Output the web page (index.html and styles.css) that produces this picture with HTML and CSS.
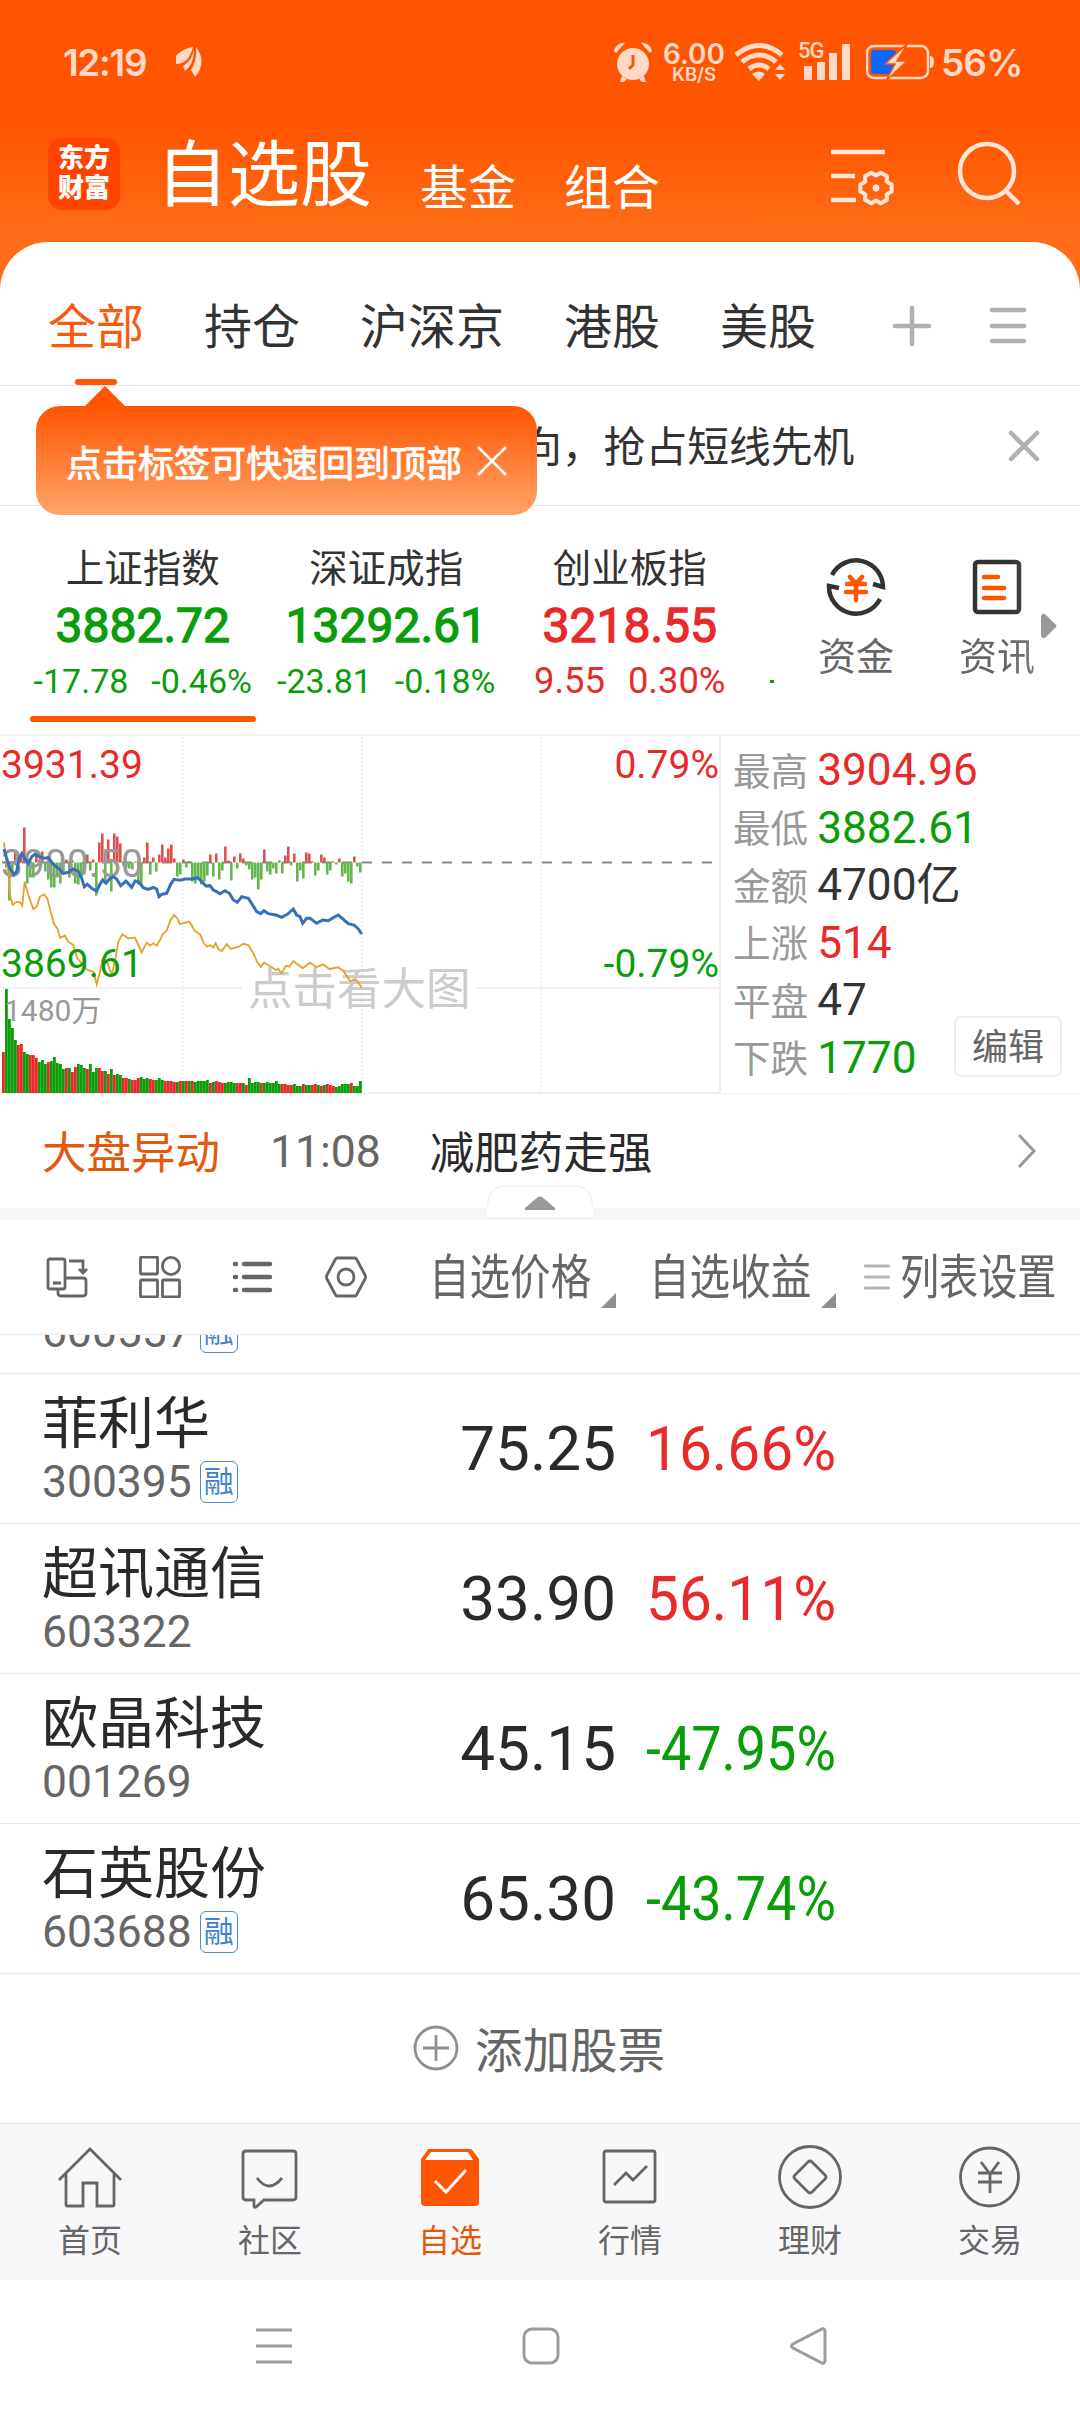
FILE: index.html
```html
<!DOCTYPE html>
<html lang="zh-CN">
<head>
  <meta charset="UTF-8">
  <title>自选股</title>
  <link rel="stylesheet" href="styles.css">
</head>
<body>
  <div class="screen">

    <header class="header">
      <div class="status">
        <span class="clock">12:19</span>
        <svg class="leaf" width="28" height="30" viewBox="0 0 28 30"><path d="M18 0C11 1 4 5 1 9v8c8 0 14-5 17-17zM19 1C18 10 14 15 8 19l2 5c6-5 9-11 9-23zM21 0c1 9-1 16-5 23l4 7c8-9 9-20 1-30z"/></svg>
        <svg class="alarm" width="38" height="40" viewBox="0 0 38 40"><circle cx="19" cy="22" r="16"/><path d="M0 9C1 4 6 0 11 1L2 11zM38 9C37 4 32 0 27 1l9 10zM8 34l5 3-3 3H6zM30 34l-5 3 3 3h4z"/><path class="hand" d="M19 13v10l-4 4"/></svg>
        <div class="speed"><b>6.00</b><small>KB/S</small></div>
        <svg class="wifi" width="52" height="38" viewBox="0 0 52 38"><path class="arc" d="M2 12Q25-7 48 12M8 19Q25 5 42 19M15 26q10-8 20 0"/><path d="M18 31q7-5 13 0l-6 7zM41 27l5-6 5 6zM41 31h10l-5 6z"/></svg>
        <div class="signal">
          <small>5G</small>
          <svg width="52" height="38" viewBox="0 0 52 38"><rect x="6" y="23" width="8" height="14" rx="1"/><rect x="19" y="19" width="8" height="18" rx="1"/><rect x="31" y="10" width="8" height="27" rx="1"/><rect x="44" y="1" width="8" height="36" rx="1"/></svg>
        </div>
        <svg class="battery" width="68" height="38" viewBox="0 0 68 38"><rect class="case" x="1" y="3" width="61" height="32" rx="7"/><rect class="charge" x="5" y="7" width="25" height="24" rx="4"/><path d="M64 13h1q3 1 3 6t-3 6h-1z"/><path class="bolt" d="M42 0L19 21h10L20 38 41 18H31z"/></svg>
        <span class="percent">56%</span>
      </div>
      <div class="title-bar">
        <div class="logo">东方<br>财富</div>
        <span class="title">自选股</span>
        <span class="subtitle">基金</span>
        <span class="subtitle">组合</span>
        <svg class="filter" width="64" height="56" viewBox="0 0 64 56"><path d="M0 6h54M0 30h24M0 54h25"/><path class="gear" d="M45 29.5l4.7-2.8 6.2 3.6-.1 5.4 4.8 2.7v7.2l-4.8 2.7.1 5.4-6.2 3.6-4.7-2.8-4.7 2.8-6.2-3.6.1-5.4-4.8-2.7v-7.2l4.8-2.7-.1-5.4 6.2-3.6z"/><circle cx="45" cy="42" r="3.4"/></svg>
        <svg class="search" width="64" height="66" viewBox="0 0 64 66"><circle cx="30" cy="30" r="27"/><path d="M48 49l14 14"/></svg>
      </div>
    </header>

    <main class="card">
      <nav class="tabs">
        <span class="tab active">全部</span>
        <span class="tab">持仓</span>
        <span class="tab">沪深京</span>
        <span class="tab">港股</span>
        <span class="tab">美股</span>
        <svg class="add-tab" width="40" height="40" viewBox="0 0 40 40"><path d="M20 2v36M3 20h34"/></svg>
        <svg class="menu-tab" width="38" height="40" viewBox="0 0 38 40"><path d="M3 4h32M3 20h32M3 35h32"/></svg>
      </nav>

      <div class="notice">
        <span>向，抢占短线先机</span>
        <svg width="32" height="32" viewBox="0 0 32 32"><path d="M3 3l26 26M29 3L3 29"/></svg>
        <div class="tooltip">
          <span>点击标签可快速回到顶部</span>
          <svg width="30" height="30" viewBox="0 0 30 30"><path d="M1 1l28 28M29 1L1 29"/></svg>
        </div>
      </div>

      <section class="indexes">
        <div class="index down current">
          <span class="index-name">上证指数</span>
          <b>3882.72</b>
          <span class="change"><i>-17.78</i><i>-0.46%</i></span>
        </div>
        <div class="index down">
          <span class="index-name">深证成指</span>
          <b>13292.61</b>
          <span class="change"><i>-23.81</i><i>-0.18%</i></span>
        </div>
        <div class="index up">
          <span class="index-name">创业板指</span>
          <b>3218.55</b>
          <span class="change"><i>9.55</i><i>0.30%</i></span>
        </div>
        <div class="next-index"></div>
        <div class="shortcut">
          <svg width="60" height="60" viewBox="0 0 60 60"><path class="line" d="M6 18A27 27 0 0 1 57 30l-10-3M54 42A27 27 0 0 1 3 29l10 2"/><path class="mark" d="M24 20l6 7 6-7M21 27h18M20 35h20M30 28v15"/></svg>
          <span>资金</span>
        </div>
        <div class="shortcut fading">
          <svg width="60" height="60" viewBox="0 0 60 60"><rect class="line" x="8" y="5" width="44" height="50" rx="3"/><path class="mark" d="M17 20h14M17 31h20M17 41h20"/></svg>
          <span>资讯</span>
        </div>
        <svg class="more" width="16" height="26" viewBox="0 0 16 26"><path d="M0 3q2-4 5-1l10 10q1 1 0 2L5 24q-3 3-5-1z"/></svg>
      </section>

      <section class="market">
        <svg class="chart" width="721" height="359" viewBox="0 0 721 359">
          <path class="grid-dot" d="M183 2v356M362 2v356M541 2v356"/>
          <path class="grid" d="M0 253h242M476 253h244M0 358h720M720 0v358"/>
          <path class="zero" d="M2 127.5h712"/>
          <g id="flow"></g>
          <g id="volume"></g>
          <text class="watermark" x="248" y="270">点击看大图</text>
          <text class="axis" x="1" y="142">3900.50</text>
          <g transform="translate(0,-10) scale(.33333)">
            <polyline class="average" points="12,352 18,400 25,440 30,510 38,540 50,530 60,532 67,542 74,470 85,510 100,552 110,545 120,515 132,508 142,520 152,560 162,597 172,610 180,638 195,632 205,650 220,660 232,700 245,715 262,735 280,740 290,778 300,740 308,702 322,712 335,750 345,710 355,650 367,628 385,640 405,638 415,660 425,682 440,653 450,662 460,655 470,662 480,645 490,625 500,617 512,585 522,570 532,580 540,598 552,594 568,590 585,618 600,628 612,655 622,665 630,660 640,668 647,655 655,672 665,678 680,658 692,672 705,668 715,666 730,656 745,660 760,685 772,712 782,725 792,713 805,720 828,735 835,732 845,745 858,722 868,725 880,708 892,718 908,730 930,713 950,726 970,718 988,732 1015,727 1030,738 1050,768 1068,764 1080,780 1085,788"/>
            <polyline class="price" points="12,372 20,400 30,432 42,448 50,440 58,400 66,385 74,400 85,415 95,395 105,388 118,395 132,400 145,398 160,418 175,430 190,445 205,442 220,432 235,440 245,460 253,485 262,478 275,490 290,498 300,478 308,465 318,475 328,462 340,455 350,462 362,482 378,468 395,487 405,468 415,470 430,488 445,493 460,487 470,492 477,515 485,508 500,505 512,478 522,463 540,466 555,462 575,462 593,458 605,470 618,483 630,482 640,495 650,500 660,506 675,497 688,505 700,525 712,532 725,515 745,520 758,540 770,560 782,566 792,557 805,566 828,570 845,577 862,568 880,552 890,570 900,575 908,595 920,580 930,580 950,595 968,585 985,587 1000,578 1015,570 1030,583 1045,596 1062,600 1075,612 1085,627"/>
          </g>
          <text class="axis up" x="1" y="43">3931.39</text>
          <text class="axis down" x="1" y="242">3869.61</text>
          <text class="axis up" x="719" y="43" text-anchor="end">0.79%</text>
          <text class="axis down" x="719" y="242" text-anchor="end">-0.79%</text>
          <text class="amount" x="4" y="286">1480万</text>
        </svg>
        <div class="stats">
          <div class="stat"><span>最高</span><em class="up">3904.96</em></div>
          <div class="stat"><span>最低</span><em class="down">3882.61</em></div>
          <div class="stat"><span>金额</span><em>4700亿</em></div>
          <div class="stat"><span>上涨</span><em class="up">514</em></div>
          <div class="stat"><span>平盘</span><em>47</em></div>
          <div class="stat"><span>下跌</span><em class="down">1770</em></div>
          <button class="edit">编辑</button>
        </div>
      </section>

      <div class="news">
        <span class="news-tag">大盘异动</span>
        <span class="news-time">11:08</span>
        <span class="news-text">减肥药走强</span>
        <svg class="chevron" width="20" height="36" viewBox="0 0 20 36"><path d="M2 2l15 16L2 34"/></svg>
      </div>
      <div class="divider">
        <svg class="handle" width="112" height="34" viewBox="0 0 112 34"><path class="flap" d="M0 33L5 13Q9 1 20 1h72q11 0 15 12l5 20z"/><path class="tri" d="M41 23L54 12q2-1 4 0l13 11q1 2-2 2H43q-3 0-2-2z"/></svg>
      </div>

      <div class="toolbar">
        <svg width="42" height="42" viewBox="0 0 42 42"><rect x="2" y="3" width="17" height="30" rx="2"/><path d="M7 27h8M23 5h14v11M33 13l4 4 4-4M20 22h17q3 0 3 3v12q0 3-3 3H15q-3 0-3-3v-4"/></svg>
        <svg width="42" height="42" viewBox="0 0 42 42"><rect x="1.5" y="1" width="17" height="17" rx="1"/><circle cx="32" cy="10" r="8.6"/><rect x="1.5" y="24" width="17" height="17" rx="1"/><rect x="23.5" y="24" width="17" height="17" rx="1"/></svg>
        <svg class="list-icon" width="42" height="42" viewBox="0 0 42 42"><path d="M3 8h1M3 21h1M3 34h1M12 8h26M12 21h26M12 34h26"/></svg>
        <svg width="42" height="42" viewBox="0 0 42 42"><path d="M12 2h18q1 0 2 2l8 15q1 2 0 4l-8 15q-1 2-2 2H12q-1 0-2-2L2 23q-1-2 0-4l8-15q1-2 2-2z"/><circle cx="21" cy="21" r="8"/></svg>
        <span class="sort"><u>自选价格</u></span>
        <span class="sort"><u>自选收益</u></span>
        <span class="settings"><svg width="26" height="28" viewBox="0 0 26 28"><path d="M1 3h24M1 14h24M1 25h24"/></svg><u>列表设置</u></span>
      </div>

      <section class="stocks">
        <div class="stock cut">
          <div class="stock-id"><span class="code">600557<i class="badge">融</i></span></div>
        </div>
        <div class="stock">
          <div class="stock-id"><span class="name">菲利华</span><span class="code">300395<i class="badge">融</i></span></div>
          <span class="value">75.25</span>
          <span class="gain up">16.66%</span>
        </div>
        <div class="stock">
          <div class="stock-id"><span class="name">超讯通信</span><span class="code">603322</span></div>
          <span class="value">33.90</span>
          <span class="gain up">56.11%</span>
        </div>
        <div class="stock">
          <div class="stock-id"><span class="name">欧晶科技</span><span class="code">001269</span></div>
          <span class="value">45.15</span>
          <span class="gain down narrow">-47.95%</span>
        </div>
        <div class="stock">
          <div class="stock-id"><span class="name">石英股份</span><span class="code">603688<i class="badge">融</i></span></div>
          <span class="value">65.30</span>
          <span class="gain down narrow">-43.74%</span>
        </div>
      </section>

      <div class="add-stock">
        <svg width="46" height="46" viewBox="0 0 46 46"><circle cx="23" cy="23" r="21"/><path d="M10 23h26M23 10v26"/></svg>
        <span>添加股票</span>
      </div>
    </main>

    <nav class="bottom-nav">
      <div class="nav-item">
        <svg width="66" height="66" viewBox="0 0 66 66"><path d="M2 35L33 4l31 31M9 29v31q0 1 1 1h16V38h14v23h16q1 0 1-1V29"/></svg>
        <span>首页</span>
      </div>
      <div class="nav-item">
        <svg width="66" height="66" viewBox="0 0 66 66"><path d="M9 6h47q3 0 3 3v43q0 3-3 3H27l-8 7q-2 1-2-1v-6H9q-3 0-3-3V9q0-3 3-3z"/><path d="M20 33q12 16 25 0"/></svg>
        <span>社区</span>
      </div>
      <div class="nav-item active">
        <svg width="66" height="66" viewBox="0 0 66 66"><path class="box" d="M11 4h42q2 0 3 2l6 8v43q0 4-4 4H8q-4 0-4-4V14l6-8q1-2 1-2z"/><path class="lid" d="M14 7h37l5 8H8z"/><path class="tick" d="M18 36l11 11 20-22"/></svg>
        <span>自选</span>
      </div>
      <div class="nav-item">
        <svg width="66" height="66" viewBox="0 0 66 66"><rect x="7" y="6" width="51" height="51" rx="2"/><path d="M17 40l12-12 7 7 14-14"/></svg>
        <span>行情</span>
      </div>
      <div class="nav-item">
        <svg width="66" height="66" viewBox="0 0 66 66"><circle cx="33" cy="32" r="30.5"/><path d="M31 17q2-2 4 0l13 13q2 2 0 4L35 47q-2 2-4 0L18 34q-2-2 0-4z"/></svg>
        <span>理财</span>
      </div>
      <div class="nav-item">
        <svg width="66" height="66" viewBox="0 0 66 66"><circle cx="32.5" cy="32" r="29"/><path d="M24 17l9 12 9-12M21 28h24M21 37h24M33 28v20"/></svg>
        <span>交易</span>
      </div>
    </nav>

    <footer class="system-bar">
      <svg width="38" height="38" viewBox="0 0 38 38"><path d="M1 3h36M1 19h36M1 35h36"/></svg>
      <svg width="38" height="38" viewBox="0 0 38 38"><rect x="2" y="2" width="34" height="34" rx="8"/></svg>
      <svg width="38" height="38" viewBox="0 0 38 38"><path d="M33 2q3-1 3 3v28q0 4-3 3L4 21q-3-2 0-4z"/></svg>
    </footer>
  </div>

  <script src="script.js"></script>
</body>
</html>
```

FILE: styles.css
```css
body {
  margin: 0;
  font-family: Roboto, "Noto Sans CJK SC", sans-serif;
  color: #333;
  background: #fff;
}
svg {
  display: block;
  flex: none;
  fill: none;
}
i, em {
  font-style: normal;
}
u {
  text-decoration: none;
}
.screen {
  width: 1080px;
  height: 2412px;
  display: flex;
  flex-direction: column;
  overflow: hidden;
}
.up {
  color: #e92a2a;
  fill: #e92a2a;
}
.down {
  color: #0a9d0a;
  fill: #0a9d0a;
}

/* header */
.header {
  height: 300px;
  margin-bottom: -58px;
  flex: none;
  background: linear-gradient(#ff5500 125px, #ff6d18 235px);
  color: #fff;
}
.status {
  display: flex;
  align-items: center;
  height: 124px;
  box-sizing: border-box;
  padding: 0 0 0 63px;
  color: #ffd9c6;
  font-family: Inter, sans-serif;
  font-weight: 600;
}
.status svg {
  fill: #ffd9c6;
}
.clock {
  width: 113px;
  font-size: 37px;
  letter-spacing: -1.3px;
}
.status .alarm {
  margin: 0 12px 0 411px;
}
.alarm .hand {
  fill: none;
  stroke: #ff5500;
  stroke-width: 3;
}
.speed {
  display: flex;
  flex-direction: column;
  align-items: center;
  width: 60px;
  margin-right: 10px;
}
.speed b {
  font-size: 28px;
  line-height: 22px;
  font-weight: 600;
}
.speed small {
  margin-top: 2px;
  font-size: 18.5px;
  line-height: 15px;
}
.wifi .arc {
  fill: none;
  stroke: #ffd9c6;
  stroke-width: 5;
}
.signal {
  position: relative;
  margin-left: 12px;
}
.signal small {
  position: absolute;
  top: -3px;
  left: 0;
  font: 500 22px/22px Roboto, sans-serif;
  letter-spacing: -1px;
}
.battery {
  margin: 0 7px 0 16px;
}
.battery .case {
  fill: none;
  stroke: #ffd9c6;
  stroke-width: 2.5;
}
.battery .charge {
  fill: #0a66ff;
}
.battery .bolt {
  stroke: #ff5500;
  stroke-width: 1.5;
}
.leaf {
  margin-left: -1px;
}
.percent {
  font-size: 37px;
  letter-spacing: -0.9px;
}
.title-bar {
  display: flex;
  align-items: center;
  height: 100px;
  padding: 0 48px;
}
.logo {
  width: 72px;
  height: 72px;
  border-radius: 14px;
  background: #ff4400;
  font-size: 26px;
  line-height: 30px;
  font-weight: 900;
  text-align: center;
  padding: 5px 0;
  box-sizing: border-box;
}
.title {
  margin: 4px 0 0 36px;
  font-size: 72px;
  line-height: 100px;
}
.subtitle {
  margin: 30px 0 0 48px;
  font-size: 48px;
  line-height: 60px;
}
.filter {
  margin-left: 171px;
  overflow: visible;
  stroke: #ffe6d8;
  stroke-width: 4.5;
}
.gear {
  stroke-width: 4;
  stroke-linejoin: round;
}
.filter circle {
  fill: #ffe6d8;
  stroke: none;
}
.search {
  margin-left: 62px;
  stroke: #ffe6d8;
  stroke-width: 4.5;
}

/* tabs */
.card {
  flex: 1;
  display: flex;
  flex-direction: column;
  border-radius: 48px 48px 0 0;
  background: #fff;
}
.tabs {
  display: flex;
  align-items: center;
  height: 143px;
  gap: 60px;
  padding: 0 48px;
  border-bottom: 1px solid #e4e4e4;
}
.tab {
  position: relative;
  padding-top: 29px;
  font-size: 48px;
  line-height: 114px;
}
.tab.active {
  color: #f95a0c;
}
.tab.active::after {
  content: "";
  position: absolute;
  left: 27px;
  bottom: 0;
  width: 42px;
  height: 6px;
  border-radius: 3px;
  background: #ff5500;
}
.tabs svg {
  margin-top: 24px;
  stroke: #b0b0b0;
  stroke-width: 4.5;
  stroke-linecap: round;
}
.add-tab {
  margin-left: 16px;
}
.menu-tab {
  margin-left: -3px;
}
.notice {
  position: relative;
  display: flex;
  align-items: center;
  justify-content: space-between;
  height: 119px;
  padding: 0 40px 0 520px;
  border-bottom: 1px solid #e4e4e4;
  font-size: 41.8px;
}
.notice > span {
  padding-bottom: 4px;
}
.notice > svg {
  stroke: #b0b0b0;
  stroke-width: 4.5;
  stroke-linecap: round;
}
.tooltip {
  position: absolute;
  left: 36px;
  top: 20px;
  width: 501px;
  height: 109px;
  box-sizing: border-box;
  display: flex;
  align-items: center;
  padding: 1px 0 0 30px;
  gap: 15px;
  border-radius: 24px;
  background: linear-gradient(#ff5500, #ffa46a);
  color: #fff;
  font-size: 36px;
  -webkit-text-stroke: 0.9px #fff;
}
.tooltip::before {
  content: "";
  position: absolute;
  left: 48px;
  top: -20px;
  border: 21px solid transparent;
  border-top: 0;
  border-bottom-color: #ff5500;
}
.tooltip svg {
  stroke: #fff;
  stroke-width: 2.6;
}

/* index cards */
.indexes {
  position: relative;
  display: flex;
  height: 228px;
  padding-left: 21px;
  border-bottom: 2px solid #f3f3f3;
}
.index {
  position: relative;
  width: 243.5px;
  display: flex;
  flex-direction: column;
  align-items: center;
  padding-top: 36px;
  box-sizing: border-box;
}
.index-name {
  font-size: 38.5px;
  line-height: 54px;
  color: #333;
}
.index b {
  font-size: 48px;
  line-height: 60px;
  font-weight: 400;
  -webkit-text-stroke: 1.3px currentColor;
}
.change {
  display: flex;
  gap: 23px;
  font-size: 34px;
  line-height: 50px;
}
.index.up .change {
  font-size: 36.4px;
}
.index.current::after {
  content: "";
  position: absolute;
  left: 9px;
  top: 210px;
  width: 226px;
  height: 6px;
  border-radius: 3px;
  background: #ff5500;
}
.next-index {
  width: 4px;
  height: 3px;
  margin: 174px 10px 0 18px;
  background: #0a9d0a;
}
.shortcut {
  width: 141px;
  display: flex;
  flex-direction: column;
  align-items: center;
  padding-top: 51px;
  font-size: 38px;
  line-height: 54px;
  color: #666;
}
.shortcut span {
  margin-top: 13px;
}
.shortcut:nth-child(5) {
  margin-left: 2px;
}
.shortcut .line {
  stroke: #333;
  stroke-width: 4.5;
}
.shortcut .mark {
  stroke: #ff5500;
  stroke-width: 4.5;
  stroke-linecap: round;
}
.fading {
  -webkit-mask-image: linear-gradient(90deg, #000 60%, rgba(0,0,0,0.55));
  mask-image: linear-gradient(90deg, #000 60%, rgba(0,0,0,0.55));
}
.more {
  position: absolute;
  left: 1041px;
  top: 107px;
  fill: #999;
}

/* chart */
.market {
  display: flex;
  height: 358px;
  margin-top: -1px;
  border-bottom: 1px solid #f0f0f0;
}
.grid, .grid-dot {
  stroke: #f0f0f0;
  stroke-width: 2;
}
.grid-dot {
  stroke-dasharray: 2 2;
}
.zero {
  stroke: #888;
  stroke-width: 2;
  stroke-dasharray: 10 10;
}
.price {
  stroke: #3670b8;
  stroke-width: 9;
}
.average {
  stroke: #e8a02c;
  stroke-width: 5.5;
}
.axis {
  font-size: 39px;
}
.axis:not(.up):not(.down) {
  fill: #999;
}
.watermark {
  font-size: 44.5px;
  fill: #ccc;
}
.amount {
  font-size: 30px;
  fill: #999;
}
.bar-up {
  fill: #e92a2a;
}
.bar-down {
  fill: #0a9d0a;
}
.flow-up {
  fill: #e05050;
}
.flow-down {
  fill: #62b84c;
}
.stats {
  position: relative;
  padding: 7px 0 0 12px;
}
.stat {
  display: flex;
  align-items: center;
  height: 57.5px;
  font-size: 37.6px;
  color: #999;
}
.stat span {
  padding-bottom: 5px;
}
.stat em {
  margin-left: 9px;
  font-size: 44.2px;
  line-height: 57px;
}
.stat em:not(.up):not(.down) {
  color: #333;
}
.edit {
  position: absolute;
  left: 233px;
  top: 281px;
  width: 108px;
  height: 61px;
  padding: 4px 0 0;
  border: 2px solid #eee;
  border-radius: 7px;
  background: #fff;
  color: #666;
  font: 36px/53px Roboto, "Noto Sans CJK SC", sans-serif;
}

/* news */
.news {
  display: flex;
  align-items: center;
  height: 114px;
  padding: 0 43px 0 42px;
  font-size: 44.5px;
  color: #2a2a2a;
}
.news-tag, .news-text {
  padding-bottom: 4px;
}
.news-tag {
  color: #e2590c;
}
.news-time {
  margin: 0 49px 0 50px;
  padding-top: 2px;
  color: #666;
}
.chevron {
  margin-left: auto;
  stroke: #999;
  stroke-width: 3;
}
.divider {
  position: relative;
  height: 12px;
  background: #f6f7fa;
}
.handle {
  position: absolute;
  left: 484px;
  top: -23px;
}
.flap {
  fill: #fff;
  stroke: #f2f2f4;
  stroke-width: 1.5;
}
.tri {
  fill: #999;
}

/* toolbar */
.toolbar {
  display: flex;
  align-items: center;
  height: 114px;
  padding-left: 46px;
  border-bottom: 1px solid #eaeaea;
  color: #666;
  font-size: 48px;
}
.toolbar > svg {
  margin-right: 51px;
  stroke: #666;
  stroke-width: 2.8;
}
.toolbar .list-icon {
  stroke-width: 4.5;
  stroke-linecap: round;
}
.toolbar u {
  display: block;
  width: 161px;
  padding-bottom: 9px;
  white-space: nowrap;
  transform: scaleX(0.845);
  transform-origin: left;
}
.sort {
  position: relative;
  width: 220px;
}
.sort:first-of-type {
  margin-left: 11px;
}
.sort::after {
  content: "";
  position: absolute;
  left: 172px;
  bottom: 9px;
  border-left: 15px solid transparent;
  border-bottom: 15px solid #8e8e94;
}
.settings {
  display: flex;
  align-items: center;
  gap: 10px;
  margin-left: -5px;
}
.settings svg {
  stroke: #b5b5b5;
  stroke-width: 2.8;
  stroke-linecap: round;
}
.toolbar .settings u {
  transform: scaleX(0.815);
}

/* stock list */
.stocks {
  display: flex;
  flex-direction: column;
  justify-content: flex-end;
  height: 639px;
  overflow: hidden;
}
.stock {
  display: flex;
  flex: none;
  align-items: center;
  height: 149px;
  padding-left: 42px;
  border-bottom: 1px solid #eaeaea;
}
.stock-id {
  width: 371px;
  display: flex;
  flex-direction: column;
}
.name {
  font-size: 56px;
  line-height: 66px;
  padding-top: 1px;
  margin-bottom: -1px;
  color: #2a2a2a;
}
.cut .stock-id {
  padding-top: 66px;
}
.code {
  display: flex;
  align-items: center;
  font-size: 44.4px;
  line-height: 52px;
  color: #666;
}
.badge {
  width: 36px;
  height: 40px;
  margin-left: 8px;
  border: 1.5px solid #4c8dcb;
  border-radius: 6px;
  color: #3f83cf;
  font-size: 30px;
  line-height: 39px;
  text-align: center;
}
.value {
  width: 203px;
  font-size: 62px;
  text-align: right;
  color: #2a2a2a;
}
.gain {
  margin-left: 30px;
  font-size: 62px;
  transform: scaleX(0.945);
  transform-origin: left;
}
.gain.narrow {
  transform: scaleX(0.87);
}
.add-stock {
  display: flex;
  align-items: center;
  justify-content: center;
  height: 148px;
  gap: 16px;
  padding-right: 2px;
  color: #666;
  font-size: 47.5px;
}
.add-stock span {
  padding-bottom: 2px;
}
.add-stock svg {
  stroke: #8e8e94;
  stroke-width: 2.8;
}

/* bottom */
.bottom-nav {
  display: flex;
  flex: none;
  height: 156px;
  border-top: 1px solid #e2e2e4;
  background: #f8f8fa;
}
.nav-item {
  flex: 1;
  display: flex;
  flex-direction: column;
  align-items: center;
  padding-top: 21px;
  color: #666;
  font-size: 32px;
  line-height: 44px;
}
.nav-item span {
  margin-top: 8px;
}
.nav-item svg {
  stroke: #666;
  stroke-width: 2.8;
}
.nav-item.active {
  color: #e2590c;
}
.nav-item .box {
  fill: #ff5500;
  stroke: none;
}
.nav-item .lid {
  fill: #fff;
  stroke: none;
}
.nav-item .tick {
  stroke: #fff;
  stroke-width: 3;
}
.system-bar {
  flex: none;
  display: flex;
  align-items: center;
  gap: 229px;
  height: 132px;
  padding-left: 255px;
  background: #fff;
}
.system-bar svg {
  stroke: #9c9c9c;
  stroke-width: 3;
}
```

FILE: script.js
```js
// one entry per 3px column, r = up, g = down
const volume = '41r 104g 74g 65g 53g 48r 49r 41g 39g 38r 38r 35r 31g 33g 29g 31r 32g 36g 30g 29g 24g 25r 25g 21r 26r 29g 28g 25g 24r 29g 21g 25g 25r 22r 22g 19r 24g 18r 19g 18g 15r 15r 14g 13r 13r 15r 16g 14g 15g 14r 13r 13g 15g 13g 12r 12r 12r 11r 11g 12r 12g 12r 12g 12r 11g 12g 12g 12g 13g 10r 11g 12r 11r 10r 10g 11g 11g 10g 10r 10r 10g 8r 15g 10g 11g 11g 10r 10g 11g 10g 10g 12g 9g 9r 9r 8r 8r 9g 7g 7g 9r 8g 8g 8r 9r 8g 7r 8g 9r 8r 7r 6g 7g 9g 9g 9g 10r 7g 7g 12g'.split(' ');
const flow = [0, -5, -38, -12, 10, 4, 6, 35, -21, -15, -15, 10, 3, 11, -9, -17, -25, -25, -15, -21, -12, 3, -15, 2, -21, -22, -15, -12, 8, -8, 3, -33, 20, 29, -20, 23, -29, 29, 26, 19, -3, -5, -6, -7, 1, -22, -23, 5, 20, -12, 5, -9, 8, 18, 5, 14, 18, 4, -14, -12, 3, -5, 1, -19, -21, -15, -22, -19, -13, 8, -14, 9, -17, -8, 16, 2, -18, 6, -6, 9, 4, -3, -7, -17, -15, -27, -17, 13, -9, -12, -6, -11, 2, -11, 7, 16, -3, 9, -19, -8, -16, 10, 9, 1, -13, -8, 8, 5, -12, -8, 1, -2, 4, -14, -11, -19, -21, 6, -4, -10];

function addBar(parent, x, y, width, height, name) {
  const bar = document.createElementNS('http://www.w3.org/2000/svg', 'rect');
  bar.setAttribute('x', x);
  bar.setAttribute('y', y);
  bar.setAttribute('width', width);
  bar.setAttribute('height', height);
  bar.setAttribute('class', name);
  parent.appendChild(bar);
}

volume.forEach((item, i) => {
  const h = parseInt(item);
  addBar(document.getElementById('volume'), 2 + i * 3, 358 - h, 2.8, h, item.endsWith('r') ? 'bar-up' : 'bar-down');
});

flow.forEach((v, i) => {
  addBar(document.getElementById('flow'), 2 + i * 3, v > 0 ? 127.5 - v : 127.5, 2.6, Math.abs(v), v > 0 ? 'flow-up' : 'flow-down');
});
```
